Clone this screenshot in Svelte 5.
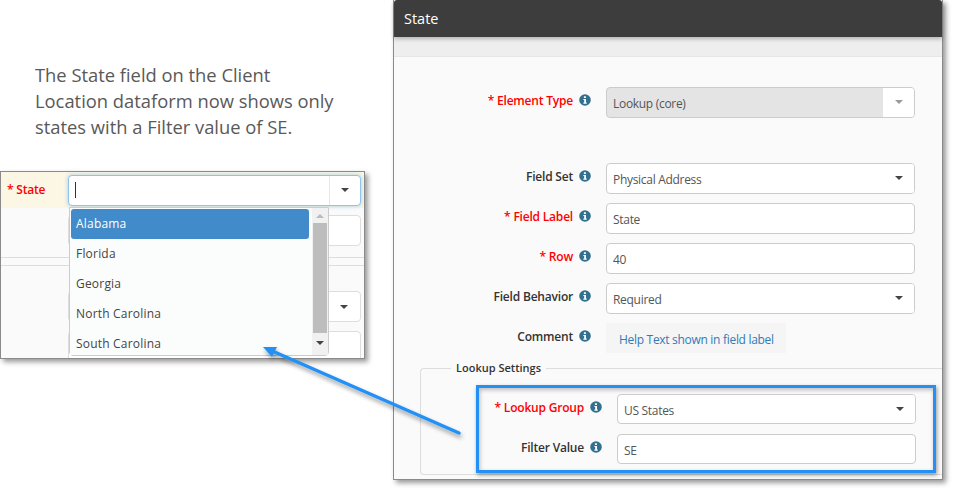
<script>
  const states = ['Alabama', 'Florida', 'Georgia', 'North Carolina', 'South Carolina'];
</script>

{#snippet info()}
  <svg class="info" viewBox="0 0 12 12" aria-hidden="true">
    <circle cx="6" cy="6" r="5.8" fill="#31708f" />
    <path d="M4.9 2.2h2v1.7h-2zM4.4 5h2.6v3.6h.7v1.1H4.4V8.6h.8V6.1h-.8z" fill="#fff" />
  </svg>
{/snippet}

{#snippet caret(muted = false)}
  <span class="caret-cell" class:muted><span class="caret"></span></span>
{/snippet}

{#snippet row(label, required, value, kind)}
  <div class="row">
    <div class="label" class:req={required}>{required ? '* ' : ''}{label}</div>
    {@render info()}
    {#if kind === 'comment'}
      <div class="comment">{value}</div>
    {:else}
      <div class="control" class:disabled={kind === 'disabled'}>
        <span class="value">{value}</span>
        {#if kind !== 'input'}
          {@render caret(kind === 'disabled')}
        {/if}
      </div>
    {/if}
  </div>
{/snippet}

<div class="canvas">
  <p class="note">The State field on the Client Location dataform now shows only states with a Filter value of SE.</p>

  <!-- left window: the dataform -->
  <div class="win-left">
    <div class="state-row">
      <div class="state-label">* State</div>
      <div class="state-input">
        <span class="cursor"></span>
        <span class="state-caret"><span class="caret"></span></span>
      </div>
    </div>
    <div class="behind">
      <div class="behind-input one"></div>
      <div class="rule"></div>
      <div class="behind-input two"><span class="caret"></span></div>
      <div class="behind-input three"></div>
    </div>
    <div class="dropdown">
      <ul class="items">
        {#each states as s, i}
          <li class:active={i === 0}>{s}</li>
        {/each}
      </ul>
      <div class="scrollbar">
        <span class="arrow up"></span>
        <span class="thumb"></span>
        <span class="arrow down"></span>
      </div>
    </div>
  </div>

  <!-- right window: field settings -->
  <div class="win-right">
    <div class="title">State</div>
    <div class="strip"></div>
    <div class="body">
      {@render row('Element Type', true, 'Lookup (core)', 'disabled')}
      <div class="spacer"></div>
      {@render row('Field Set', false, 'Physical Address', 'select')}
      {@render row('Field Label', true, 'State', 'input')}
      {@render row('Row', true, '40', 'input')}
      {@render row('Field Behavior', false, 'Required', 'select')}
      {@render row('Comment', false, 'Help Text shown in field label', 'comment')}

      <div class="fieldset">
        <div class="legend">Lookup Settings</div>
        <div class="inner">
          {@render row('Lookup Group', true, 'US States', 'select')}
          {@render row('Filter Value', false, 'SE', 'input')}
        </div>
      </div>
    </div>
  </div>

  <!-- callout annotations -->
  <div class="callout"></div>
  <svg class="arrow-layer" width="953" height="490" aria-hidden="true">
    <defs>
      <filter id="sh" x="-10%" y="-10%" width="120%" height="130%">
        <feDropShadow dx="1" dy="3" stdDeviation="2" flood-color="#000" flood-opacity="0.4" />
      </filter>
    </defs>
    <g filter="url(#sh)">
      <path d="M459 433 L270 350" stroke="#2490f5" stroke-width="3.5" stroke-linecap="round" fill="none" />
      <path d="M263 347 L277 347 L272 357 Z" fill="#2490f5" />
    </g>
  </svg>
</div>

<style>
  :global(body) {
    margin: 0;
    background: #fff;
  }
  .canvas {
    position: relative;
    width: 953px;
    height: 490px;
    overflow: hidden;
    font-family: "Open Sans", "Liberation Sans", sans-serif;
    font-size: 12px;
    color: #555;
  }
  .note {
    position: absolute;
    left: 35px;
    top: 62px;
    width: 306px;
    margin: 0;
    font-size: 18.35px;
    line-height: 26px;
    color: #595959;
  }

  /* left window */
  .win-left {
    position: absolute;
    left: 0;
    top: 171px;
    width: 363px;
    height: 186px;
    border: 1px solid #8a8a8a;
    background: #fafafa;
    box-shadow: 3px 3px 5px rgba(0, 0, 0, 0.4);
  }
  .state-row {
    display: flex;
    align-items: center;
    height: 36px;
    background: #fcf6e4;
  }
  .state-label {
    width: 67px;
    padding-left: 6px;
    box-sizing: border-box;
    color: #f00;
    font-weight: 600;
    letter-spacing: -0.2px;
    margin-top: -2px;
  }
  .state-input {
    display: flex;
    align-items: center;
    justify-content: space-between;
    width: 293px;
    height: 31px;
    box-sizing: border-box;
    background: #fff;
    border: 1px solid #8fc3ea;
    border-radius: 4px;
    box-shadow: 0 0 4px rgba(102, 175, 233, 0.6);
  }
  .cursor {
    width: 1px;
    height: 16px;
    margin-left: 6px;
    background: #333;
  }
  .state-caret {
    display: flex;
    align-items: center;
    justify-content: center;
    width: 30px;
    height: 100%;
    border-left: 1px solid #d8ebf8;
  }
  .behind {
    position: relative;
    height: 150px;
    overflow: hidden;
  }
  .behind-input {
    position: absolute;
    left: 67px;
    width: 293px;
    box-sizing: border-box;
    background: #fff;
    border: 1px solid #ddd;
    border-radius: 4px;
  }
  .behind-input.one { top: 7px; height: 31px; }
  .behind-input.two {
    top: 83px;
    height: 31px;
    display: flex;
    align-items: center;
    justify-content: flex-end;
    padding-right: 12px;
  }
  .behind-input.three { top: 123px; height: 40px; }
  .rule {
    position: absolute;
    left: 0;
    right: 0;
    top: 49px;
    height: 7px;
    border-top: 1px solid #ddd;
    border-bottom: 1px solid #ddd;
  }
  .dropdown {
    position: absolute;
    left: 68px;
    top: 35px;
    width: 260px;
    height: 149px;
    box-sizing: border-box;
    display: flex;
    background: #fff;
    border: 1px solid #ccc;
    border-radius: 0 0 4px 4px;
  }
  .items {
    flex: 1;
    margin: 0;
    padding: 1px 3px 0 1px;
    list-style: none;
    background: #fbfdfd;
  }
  .items li {
    height: 30px;
    line-height: 30px;
    padding-left: 5px;
    color: #444;
    letter-spacing: 0.2px;
  }
  .items li.active {
    background: #428bca;
    color: #fff;
    border-radius: 3px;
  }
  .scrollbar {
    display: flex;
    flex-direction: column;
    align-items: center;
    width: 16px;
    background: #f1f1f1;
  }
  .thumb {
    width: 14px;
    height: 110px;
    background: #bdbdbd;
  }
  .arrow {
    width: 0;
    height: 15px;
    box-sizing: border-box;
    border-left: 4px solid transparent;
    border-right: 4px solid transparent;
  }
  .arrow.up {
    height: 0;
    margin: 6px 0 5px;
    border-bottom: 4px solid #bbb;
  }
  .arrow.down {
    height: 0;
    margin-top: 8px;
    border-top: 4px solid #444;
  }

  /* right window */
  .win-right {
    position: absolute;
    left: 393px;
    top: 0;
    width: 548px;
    height: 479px;
    border-left: 1px solid #8a8a8a;
    border-right: 1px solid #8a8a8a;
    border-bottom: 1px solid #8a8a8a;
    background: #fafafa;
    box-shadow: 3px 3px 5px rgba(0, 0, 0, 0.4);
  }
  .title {
    height: 37px;
    line-height: 37px;
    padding-left: 10px;
    font-size: 14.5px;
    color: #fff;
    background: #3d3d3d;
    border-radius: 3px 3px 0 0;
    box-shadow: 0 2px 4px rgba(0, 0, 0, 0.25);
    position: relative;
  }
  .strip {
    height: 19px;
    background: #eee;
    border-bottom: 1px solid #e6e6e6;
  }
  .body {
    padding-top: 30px;
  }
  .row {
    display: flex;
    align-items: center;
    height: 30px;
    margin-bottom: 10px;
  }
  .label {
    width: 179px;
    text-align: right;
    font-weight: 600;
    color: #333;
    margin-top: -3px;
    letter-spacing: -0.2px;
  }
  .label.req {
    color: #f00;
  }
  .info {
    width: 12px;
    height: 12px;
    margin: -4px 15px 0 6px;
    flex: none;
  }
  .control {
    display: flex;
    align-items: center;
    justify-content: space-between;
    width: 309px;
    height: 31px;
    box-sizing: border-box;
    background: #fff;
    border: 1px solid #ccc;
    border-radius: 4px;
    overflow: hidden;
  }
  .control.disabled {
    background: #e4e4e4;
  }
  .value {
    padding: 2px 0 0 6px;
    letter-spacing: -0.3px;
  }
  .caret-cell {
    display: flex;
    align-items: center;
    justify-content: center;
    width: 31px;
    height: 100%;
    background: #fff;
  }
  .caret {
    width: 0;
    height: 0;
    border-left: 4px solid transparent;
    border-right: 4px solid transparent;
    border-top: 4px solid #444;
  }
  .caret-cell.muted .caret {
    border-top-color: #999;
  }
  .comment {
    width: 180px;
    height: 30px;
    box-sizing: border-box;
    padding: 2px 0 0 13px;
    line-height: 30px;
    background: #f5f5f5;
    color: #337ab7;
    white-space: nowrap;
    letter-spacing: -0.3px;
  }
  .spacer {
    height: 36px;
  }
  .fieldset {
    position: relative;
    margin: 15px 0 0 26px;
    height: 107px;
    box-sizing: border-box;
    border: 1px solid #ddd;
    border-right: none;
    border-radius: 4px 0 0 4px;
  }
  .legend {
    position: absolute;
    left: 30px;
    top: -9px;
    padding: 0 5px;
    background: #fafafa;
    line-height: 16px;
    font-size: 11px;
    font-weight: 600;
    color: #333;
  }
  .inner {
    padding: 25px 0 0 0;
    margin-left: -15px;
  }
  .inner .label {
    width: 163px;
    margin-left: 15px;
  }
  .inner .control {
    width: 299px;
    height: 30px;
  }

  /* annotations */
  .callout {
    position: absolute;
    left: 476px;
    top: 385px;
    width: 460px;
    height: 88px;
    box-sizing: border-box;
    border: 3px solid #2490f5;
    box-shadow: 1px 2px 4px rgba(0, 0, 0, 0.4), inset 1px 2px 4px rgba(0, 0, 0, 0.25);
  }
  .arrow-layer {
    position: absolute;
    left: 0;
    top: 0;
  }
</style>
